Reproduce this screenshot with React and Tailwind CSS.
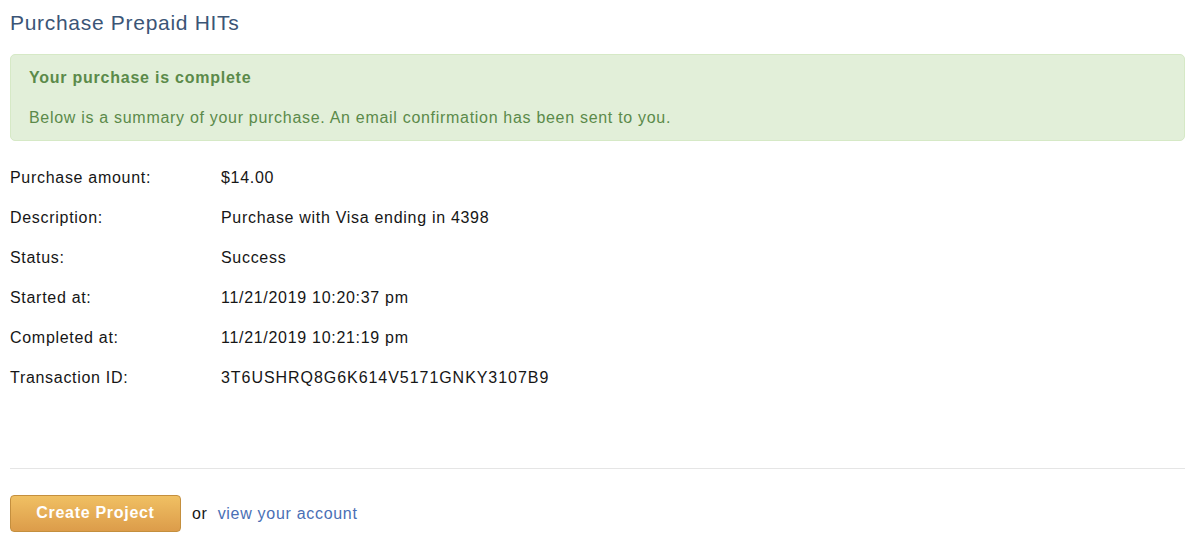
const rows = [
  ["Purchase amount:", "$14.00"],
  ["Description:", "Purchase with Visa ending in 4398"],
  ["Status:", "Success"],
  ["Started at:", "11/21/2019 10:20:37 pm"],
  ["Completed at:", "11/21/2019 10:21:19 pm"],
  ["Transaction ID:", "3T6USHRQ8G6K614V5171GNKY3107B9"],
];

export default function App() {
  return (
    <div className="min-h-screen bg-white pl-[10px] pr-[8px] pt-[10px] text-[16px] tracking-[0.7px] text-[#161616]" style={{ fontFamily: '"Liberation Sans", Arial, sans-serif' }}>
      <h1 className="text-[21px] leading-[26px] text-[#3b5576]">Purchase Prepaid HITs</h1>

      <div className="mt-[18px] rounded-[5px] border border-[#d6e9c6] bg-[#e2efd9] px-[18px] pt-[12px] pb-[11px] text-[#5b8a4a]">
        <div className="text-[16px] font-bold leading-[22px] tracking-[0.76px]">Your purchase is complete</div>
        <div className="mt-[18px] leading-[22px]">Below is a summary of your purchase. An email confirmation has been sent to you.</div>
      </div>

      <div className="mt-[26px] flex flex-col gap-[18px]">
        {rows.map(([label, value]) => (
          <div key={label} className="flex leading-[22px]">
            <div className="w-[211px] shrink-0">{label}</div>
            <div className={label === "Transaction ID:" ? "tracking-[0.95px]" : ""}>{value}</div>
          </div>
        ))}
      </div>

      <div className="mt-[79px] border-t border-[#e5e5e5]" />

      <div className="mt-[26px] flex items-center">
        <button className="h-[37px] w-[171px] rounded-[4px] border border-[#c48f3e] bg-gradient-to-b from-[#f0c063] to-[#dc9c4a] pb-[1px] text-[16px] font-bold tracking-[0.7px] text-white">
          Create Project
        </button>
        <span className="ml-[11px]">or</span>
        <a href="#" className="ml-[10px] text-[#4a6fb5]">view your account</a>
      </div>
    </div>
  );
}
